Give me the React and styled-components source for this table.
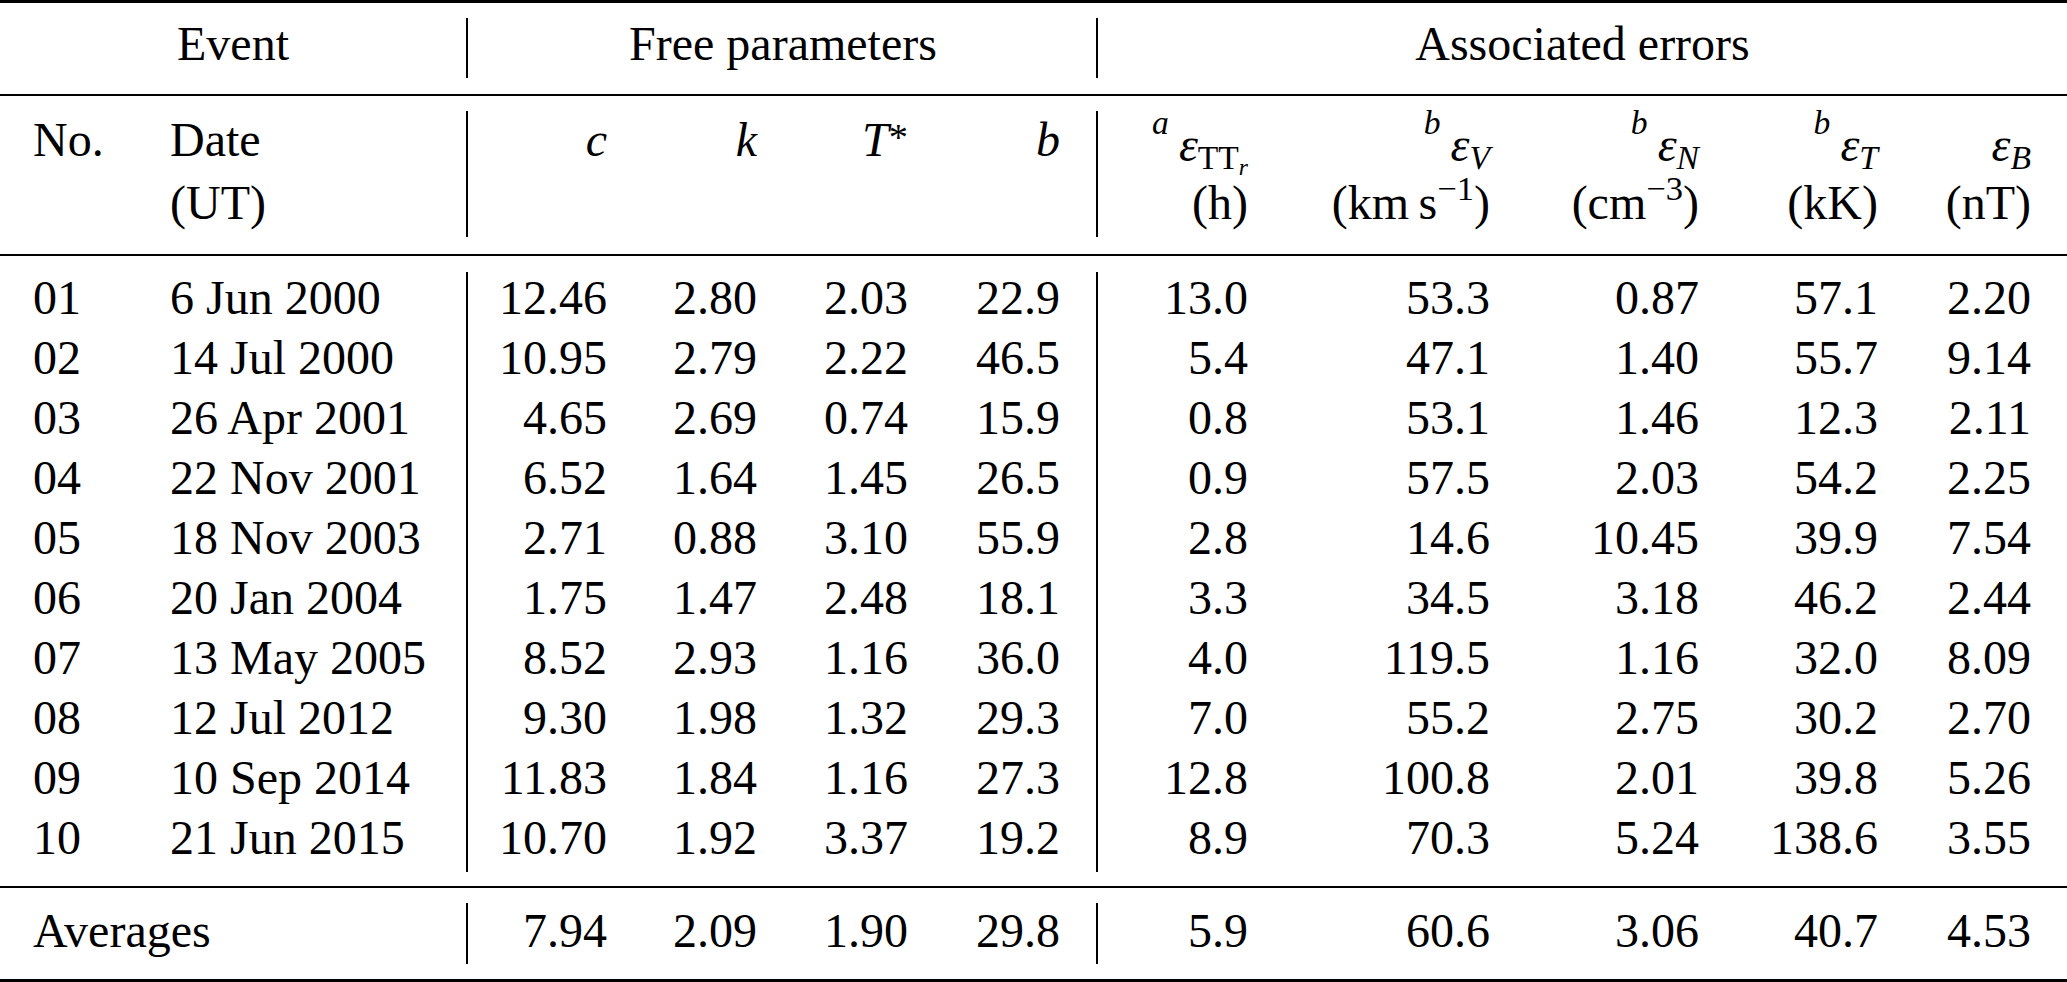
import React from "react";
import styled, { createGlobalStyle } from "styled-components";

const SERIF = `"Liberation Serif", "Times New Roman", serif`;

const GlobalStyle = createGlobalStyle`
  html, body {
    margin: 0;
    padding: 0;
    background: #fff;
  }
  body {
    overflow: hidden;
    font: 48px/52px ${SERIF};
  }
`;

const COLS =
  "170px 296px 2px 139px 150px 151px 152px 38px 150px 242px 209px 179px 153px 36px";

const Table = styled.div`
  width: 2067px;
  font: 48px/52px ${SERIF};
  color: #000;
`;

const Block = styled.div`
  padding: ${(p) => p.$pt}px 0 ${(p) => p.$pb}px;
  border-top: ${(p) => p.$top || 0}px solid #000;
  border-bottom: ${(p) => p.$bottom}px solid #000;
`;

const Row = styled.div`
  --lead: ${(p) => p.$lead || 0}px;
  display: grid;
  grid-template-columns: ${COLS};
  grid-template-rows: 1fr;
  height: ${(p) => p.$h}px;
`;

const Cell = styled.div`
  grid-row: 1;
  grid-column: ${(p) => p.$col || "auto"};
  padding-top: calc(var(--lead) + ${(p) => p.$drop || 0}px);
  padding-left: ${(p) => p.$indent || 0}px;
  line-height: 52px;
  white-space: nowrap;
  text-align: ${(p) => p.$align || "right"};
`;

const Sep = styled.div`
  grid-row: 1;
  grid-column: ${(p) => p.$col || "auto"};
  justify-self: end;
  width: 2px;
  background: #000;
`;

const Ital = styled.i`
  font-style: italic;
`;

const Mark = styled.i`
  font-style: italic;
  font-size: 0.7em;
  line-height: 0;
  vertical-align: 0.8em;
  margin-right: 0.3em;
`;

const Sub = styled.span`
  font-size: 0.7em;
  line-height: 0;
  vertical-align: -0.24em;
  font-style: ${(p) => (p.$italic ? "italic" : "normal")};
`;

const Sup = styled.span`
  font-size: 0.72em;
  line-height: 0;
  vertical-align: 0.55em;
`;

const Star = styled.span`
  font-size: 0.8em;
  line-height: 0;
  vertical-align: 0.15em;
`;

const rows = [
  ["01", "6 Jun 2000", "12.46", "2.80", "2.03", "22.9", "13.0", "53.3", "0.87", "57.1", "2.20"],
  ["02", "14 Jul 2000", "10.95", "2.79", "2.22", "46.5", "5.4", "47.1", "1.40", "55.7", "9.14"],
  ["03", "26 Apr 2001", "4.65", "2.69", "0.74", "15.9", "0.8", "53.1", "1.46", "12.3", "2.11"],
  ["04", "22 Nov 2001", "6.52", "1.64", "1.45", "26.5", "0.9", "57.5", "2.03", "54.2", "2.25"],
  ["05", "18 Nov 2003", "2.71", "0.88", "3.10", "55.9", "2.8", "14.6", "10.45", "39.9", "7.54"],
  ["06", "20 Jan 2004", "1.75", "1.47", "2.48", "18.1", "3.3", "34.5", "3.18", "46.2", "2.44"],
  ["07", "13 May 2005", "8.52", "2.93", "1.16", "36.0", "4.0", "119.5", "1.16", "32.0", "8.09"],
  ["08", "12 Jul 2012", "9.30", "1.98", "1.32", "29.3", "7.0", "55.2", "2.75", "30.2", "2.70"],
  ["09", "10 Sep 2014", "11.83", "1.84", "1.16", "27.3", "12.8", "100.8", "2.01", "39.8", "5.26"],
  ["10", "21 Jun 2015", "10.70", "1.92", "3.37", "19.2", "8.9", "70.3", "5.24", "138.6", "3.55"],
];

const averages = ["7.94", "2.09", "1.90", "29.8", "5.9", "60.6", "3.06", "40.7", "4.53"];

function ErrLabel({ mark, children }) {
  return (
    <>
      {mark && <Mark>{mark}</Mark>}
      <Ital>ε</Ital>
      {children}
    </>
  );
}

function NumberCells({ values }) {
  return (
    <>
      {values.slice(0, 4).map((v, i) => (
        <Cell key={"f" + i}>{v}</Cell>
      ))}
      <Sep />
      {values.slice(4).map((v, i) => (
        <Cell key={"e" + i}>{v}</Cell>
      ))}
    </>
  );
}

export default function App() {
  return (
    <>
      <GlobalStyle />
      <Table>
        <Block $top={3} $pt={15} $pb={16} $bottom={2}>
          <Row $h={60}>
            <Cell $col="1 / 3" $align="center">Event</Cell>
            <Sep $col="3" />
            <Cell $col="4 / 9" $align="center">Free parameters</Cell>
            <Sep $col="8" />
            <Cell $col="9 / -1" $align="center">Associated errors</Cell>
          </Row>
        </Block>

        <Block $pt={15} $pb={17} $bottom={2}>
          <Row $h={63} $lead={3}>
            <Cell $align="left" $indent={33}>No.</Cell>
            <Cell $align="left">Date</Cell>
            <Sep />
            <Cell><Ital>c</Ital></Cell>
            <Cell><Ital>k</Ital></Cell>
            <Cell><Ital>T</Ital><Star>*</Star></Cell>
            <Cell><Ital>b</Ital></Cell>
            <Sep />
            <Cell $drop={5}>
              <ErrLabel mark="a">
                <Sub>TT<Sub $italic>r</Sub></Sub>
              </ErrLabel>
            </Cell>
            <Cell $drop={5}>
              <ErrLabel mark="b"><Sub $italic>V</Sub></ErrLabel>
            </Cell>
            <Cell $drop={5}>
              <ErrLabel mark="b"><Sub $italic>N</Sub></ErrLabel>
            </Cell>
            <Cell $drop={5}>
              <ErrLabel mark="b"><Sub $italic>T</Sub></ErrLabel>
            </Cell>
            <Cell $drop={5}>
              <ErrLabel><Sub $italic>B</Sub></ErrLabel>
            </Cell>
          </Row>
          <Row $h={63} $lead={3}>
            <Cell />
            <Cell $align="left">(UT)</Cell>
            <Sep />
            <Cell />
            <Cell />
            <Cell />
            <Cell />
            <Sep />
            <Cell>(h)</Cell>
            <Cell>(km&#8201;s<Sup>−1</Sup>)</Cell>
            <Cell>(cm<Sup>−3</Sup>)</Cell>
            <Cell>(kK)</Cell>
            <Cell>(nT)</Cell>
          </Row>
        </Block>

        <Block $pt={16} $pb={14} $bottom={2}>
          {rows.map((r) => (
            <Row key={r[0]} $h={60}>
              <Cell $align="left" $indent={33}>{r[0]}</Cell>
              <Cell $align="left">{r[1]}</Cell>
              <Sep />
              <NumberCells values={r.slice(2)} />
            </Row>
          ))}
        </Block>

        <Block $pt={15} $pb={15} $bottom={3}>
          <Row $h={61} $lead={2}>
            <Cell $col="1 / 3" $align="left" $indent={33}>Averages</Cell>
            <Sep $col="3" />
            <NumberCells values={averages} />
          </Row>
        </Block>
      </Table>
    </>
  );
}
